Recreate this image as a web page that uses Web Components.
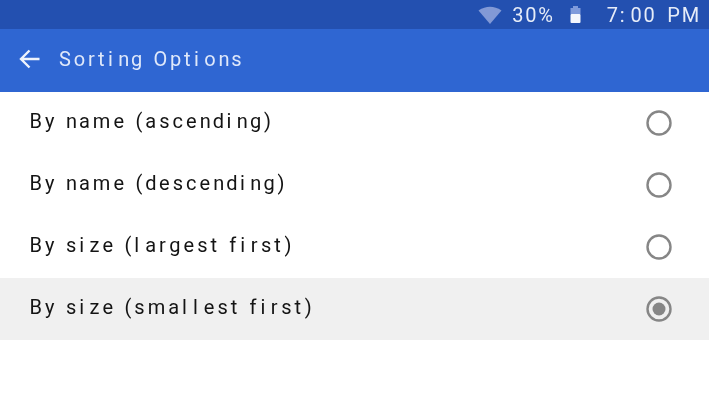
<!DOCTYPE html>
<html>
<head>
<meta charset="utf-8">
<title>Sorting Options</title>
<style>
html, body { margin: 0; padding: 0; background: #fff; }
body { width: 709px; height: 402px; overflow: hidden; font-family: Roboto, sans-serif; }
</style>
</head>
<body>
<status-bar></status-bar>
<app-bar>Sorting Options</app-bar>
<option-list>
  <sort-option>By name (ascending)</sort-option>
  <sort-option>By name (descending)</sort-option>
  <sort-option>By size (largest first)</sort-option>
  <sort-option selected>By size (smallest first)</sort-option>
</option-list>
<script>
// the device font has coarse advances: narrow letters get more room, wide ones less
const EXTRA = { i: 2.5, l: 3, f: 1, r: 0.5, t: 0.75, d: -0.5, n: -1, ":": 4, " ": 0.5 };

function spaced(text, base) {
  return [...text.trim()].map(c => {
    const ls = base + (EXTRA[c] || 0);
    return `<span style="letter-spacing:${ls}px">${c}</span>`;
  }).join("");
}

class StatusBar extends HTMLElement {
  constructor() {
    super();
    this.attachShadow({ mode: "open" });
    this.shadowRoot.innerHTML = `
<style>
:host { display: flex; align-items: center; justify-content: flex-end; height: 29px; background: #2350b0; color: #e6ecf8; font: 20px Roboto, sans-serif; letter-spacing: 1.8px; padding-right: 8px; box-sizing: border-box; filter: blur(0.35px); }
svg { display: block; }
.wifi { margin-right: 10px; }
.batt { margin-left: 14px; margin-right: 25px; }
.clock { word-spacing: 3.500px; }
</style>
<svg class="wifi" width="24" height="18" viewBox="0 0 24 18"><path d="M0.5 4.5Q12 -3 23.500 4.500L12 18Z" fill="#8299d6"/></svg>
<span>30%</span>
<svg class="batt" width="13" height="19" viewBox="0 0 13 19"><path d="M4 1H9V3H11.500V9H1.500V3H4Z" fill="#7f9adb"/><rect x="1.500" y="9" width="10" height="9" rx="1" fill="#f4f6fc"/></svg>
<span class="clock">${spaced("7:00 PM", 1.8)}</span>`;
  }
}

class AppBar extends HTMLElement {
  constructor() {
    super();
    this.attachShadow({ mode: "open" });
    this.shadowRoot.innerHTML = `
<style>
:host { display: flex; align-items: center; height: 63px; background: #2f66d2; color: #dfe8fa; font: 20px Roboto, sans-serif; padding-left: 19px; box-sizing: border-box; filter: blur(0.35px); }
svg { display: block; margin: 0 18px 4px 0; }
.title { padding-bottom: 4px; }
</style>
<svg width="22" height="20" viewBox="0 0 22 20"><path d="M20.500 10H2M10.500 1.500L2 10L10.500 18.500" fill="none" stroke="#eef3fc" stroke-width="2.400"/></svg>
<span class="title">${spaced(this.textContent, 2.8)}</span>`;
  }
}

class OptionList extends HTMLElement {
  constructor() {
    super();
    this.attachShadow({ mode: "open" });
    this.shadowRoot.innerHTML = `
<style>:host { display: flex; flex-direction: column; }</style>
<slot></slot>`;
  }
}

class SortOption extends HTMLElement {
  constructor() {
    super();
    this.attachShadow({ mode: "open" });
    const dot = this.hasAttribute("selected")
      ? '<circle cx="13" cy="13" r="6.500" fill="#868686"/>'
      : "";
    this.shadowRoot.innerHTML = `
<style>
:host { display: flex; align-items: center; justify-content: space-between; height: 62px; padding: 0 37px 0 29.5px; box-sizing: border-box; color: #141414; font: 20px Roboto, sans-serif; filter: blur(0.35px); }
:host([selected]) { background: #f0f0f0; }
svg { display: block; }
.label { padding-bottom: 4px; }
</style>
<span class="label">${spaced(this.textContent, 3)}</span>
<svg width="26" height="26" viewBox="0 0 26 26"><circle cx="13" cy="13" r="11.500" fill="none" stroke="#868686" stroke-width="2.400"/>${dot}</svg>`;
  }
}

customElements.define("status-bar", StatusBar);
customElements.define("app-bar", AppBar);
customElements.define("option-list", OptionList);
customElements.define("sort-option", SortOption);
</script>
</body>
</html>
